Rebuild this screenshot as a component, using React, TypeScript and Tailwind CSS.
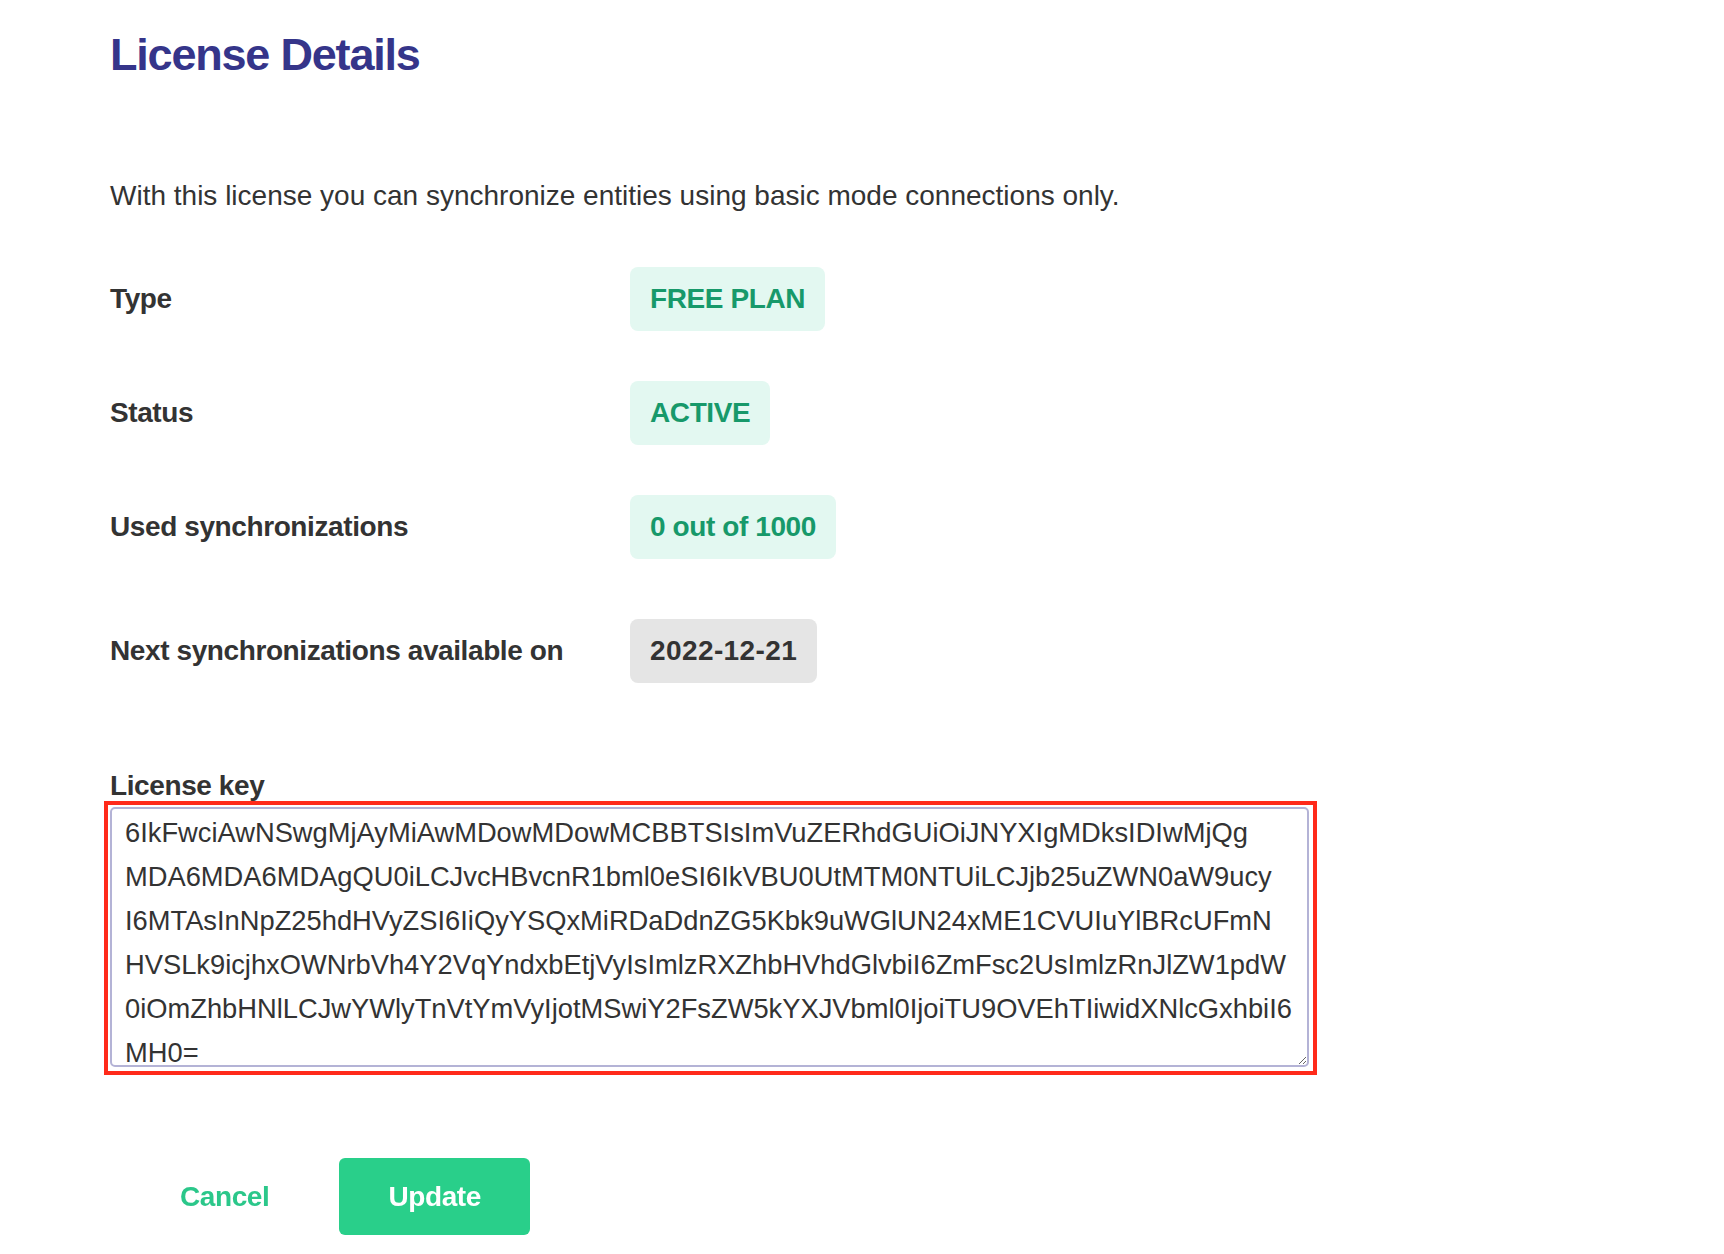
import React, { useEffect, useRef } from "react";

const licenseKey = [
  "6IkFwciAwNSwgMjAyMiAwMDowMDowMCBBTSIsImVuZERhdGUiOiJNYXIgMDksIDIwMjQg",
  "MDA6MDA6MDAgQU0iLCJvcHBvcnR1bml0eSI6IkVBU0UtMTM0NTUiLCJjb25uZWN0aW9ucy",
  "I6MTAsInNpZ25hdHVyZSI6IiQyYSQxMiRDaDdnZG5Kbk9uWGlUN24xME1CVUIuYlBRcUFmN",
  "HVSLk9icjhxOWNrbVh4Y2VqYndxbEtjVyIsImlzRXZhbHVhdGlvbiI6ZmFsc2UsImlzRnJlZW1pdW",
  "0iOmZhbHNlLCJwYWlyTnVtYmVyIjotMSwiY2FsZW5kYXJVbml0IjoiTU9OVEhTIiwidXNlcGxhbiI6",
  "MH0=",
].join("\n");

type Row = { label: string; value: string; tone: "green" | "gray"; extraGap?: boolean };

const rows: Row[] = [
  { label: "Type", value: "FREE PLAN", tone: "green" },
  { label: "Status", value: "ACTIVE", tone: "green" },
  { label: "Used synchronizations", value: "0 out of 1000", tone: "green" },
  { label: "Next synchronizations available on", value: "2022-12-21", tone: "gray", extraGap: true },
];

const Badge = ({ value, tone }: { value: string; tone: "green" | "gray" }) => (
  <span
    className={
      tone === "green"
        ? "h-[64px] px-[20px] flex items-center rounded-[8px] bg-[#e3f8f1] text-[#17996a] text-[28px] font-bold tracking-[-0.4px]"
        : "h-[64px] px-[20px] flex items-center rounded-[8px] bg-[#e5e5e5] text-[#333333] text-[28px] font-bold tracking-[0.4px]"
    }
  >
    {value}
  </span>
);

export default function App() {
  const ref = useRef<HTMLTextAreaElement>(null);

  useEffect(() => {
    const el = ref.current;
    if (!el) return;
    el.focus({ preventScroll: true });
    el.setSelectionRange(el.value.length, el.value.length);
    el.scrollTop = 0;
    el.scrollLeft = 0;
  }, []);

  return (
    <div className="min-h-screen bg-white pl-[110px] pt-[28px] font-['Liberation_Sans',Arial,sans-serif] text-[#333333]">
      <h1 className="text-[45px] leading-[54px] font-bold tracking-[-1.2px] text-[#35358a]">
        License Details
      </h1>

      <p className="mt-[94px] text-[28px] leading-[40px]">
        With this license you can synchronize entities using basic mode connections only.
      </p>

      <div className="mt-[51px] flex flex-col">
        {rows.map((row, i) => (
          <div
            key={row.label}
            className={
              i === 0
                ? "flex items-center h-[64px]"
                : row.extraGap
                ? "flex items-center h-[64px] mt-[60px]"
                : "flex items-center h-[64px] mt-[50px]"
            }
          >
            <span className="w-[520px] text-[28px] font-bold tracking-[-0.4px]">{row.label}</span>
            <Badge value={row.value} tone={row.tone} />
          </div>
        ))}
      </div>

      <label
        htmlFor="license-key"
        className="block mt-[88px] text-[28px] leading-[30px] font-bold tracking-[-0.4px]"
      >
        License key
      </label>
      <div className="-ml-[6px] w-[1213px] border-4 border-[#ff2a1a] pl-[2px] pt-[2px] pr-[4px] pb-[4px]">
        <textarea
          id="license-key"
          ref={ref}
          defaultValue={licenseKey}
          spellCheck={false}
          className="block w-full h-[260px] border-2 border-[#b4b3d6] rounded-[5px] pl-[13px] pr-0 pt-[2px] text-[27.3px] leading-[44px] text-[#333333] whitespace-pre overflow-hidden outline-none focus:outline-none"
        />
      </div>

      <div className="mt-[83px] ml-[20px] flex items-center gap-[20px]">
        <button className="h-[77px] px-[50px] text-[28px] font-bold tracking-[-0.4px] text-[#2bc78a]">
          Cancel
        </button>
        <button className="h-[77px] px-[49px] rounded-[6px] bg-[#29cf8a] text-[28px] font-bold tracking-[-0.4px] text-white">
          Update
        </button>
      </div>
    </div>
  );
}
